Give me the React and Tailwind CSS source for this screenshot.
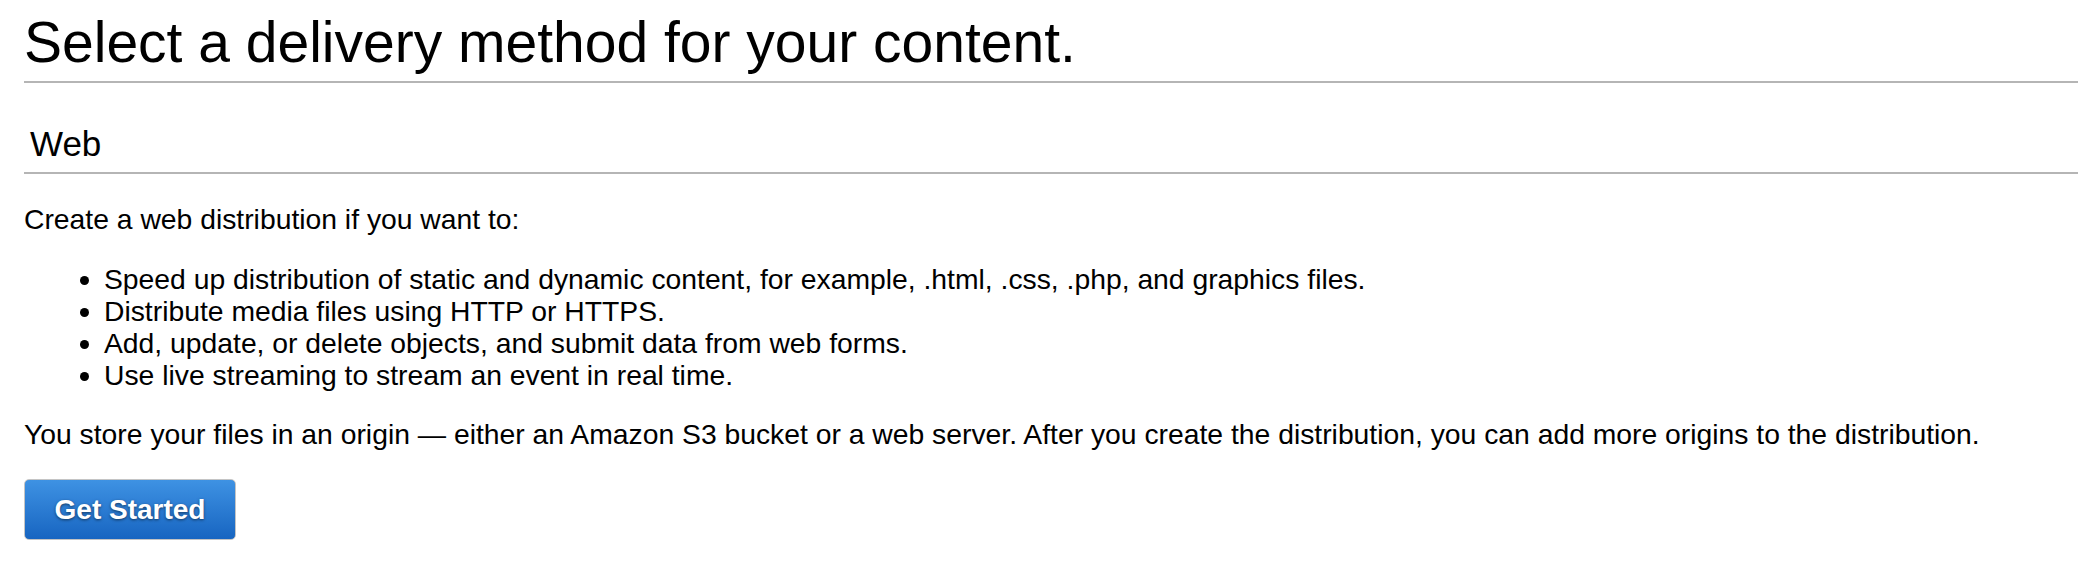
export default function App() {
  const font = { fontFamily: '"Liberation Sans", Arial, Helvetica, sans-serif' };
  return (
    <div className="min-h-screen bg-white pl-[24px] text-black" style={font}>
      <h1 className="pt-[14px] pb-[10px] border-b-2 border-[#b5b5b5] text-[57px] leading-[57px] font-normal">
        Select a delivery method for your content.
      </h1>
      <div className="pt-[43px] pb-[10px] pl-[6px] border-b-2 border-[#b5b5b5] text-[35px] leading-[36px]">
        Web
      </div>
      <p className="mt-[29px] text-[28.3px] leading-[32px]">Create a web distribution if you want to:</p>
      <ul className="mt-[28px] list-disc pl-[80px] text-[28.3px] leading-[32px]">
        <li>Speed up distribution of static and dynamic content, for example, .html, .css, .php, and graphics files.</li>
        <li>Distribute media files using HTTP or HTTPS.</li>
        <li>Add, update, or delete objects, and submit data from web forms.</li>
        <li>Use live streaming to stream an event in real time.</li>
      </ul>
      <p className="mt-[27px] text-[28.3px] leading-[32px]">
        You store your files in an origin — either an Amazon S3 bucket or a web server. After you create the distribution, you can add more origins to the distribution.
      </p>
      <button className="mt-[29px] h-[61px] w-[212px] rounded-[5px] border border-[#c4c4c4] bg-gradient-to-b from-[#3e92e3] to-[#1765c1] text-[28px] font-bold text-white [text-shadow:0_1px_3px_rgba(0,0,0,0.55)]">
        Get Started
      </button>
    </div>
  );
}
